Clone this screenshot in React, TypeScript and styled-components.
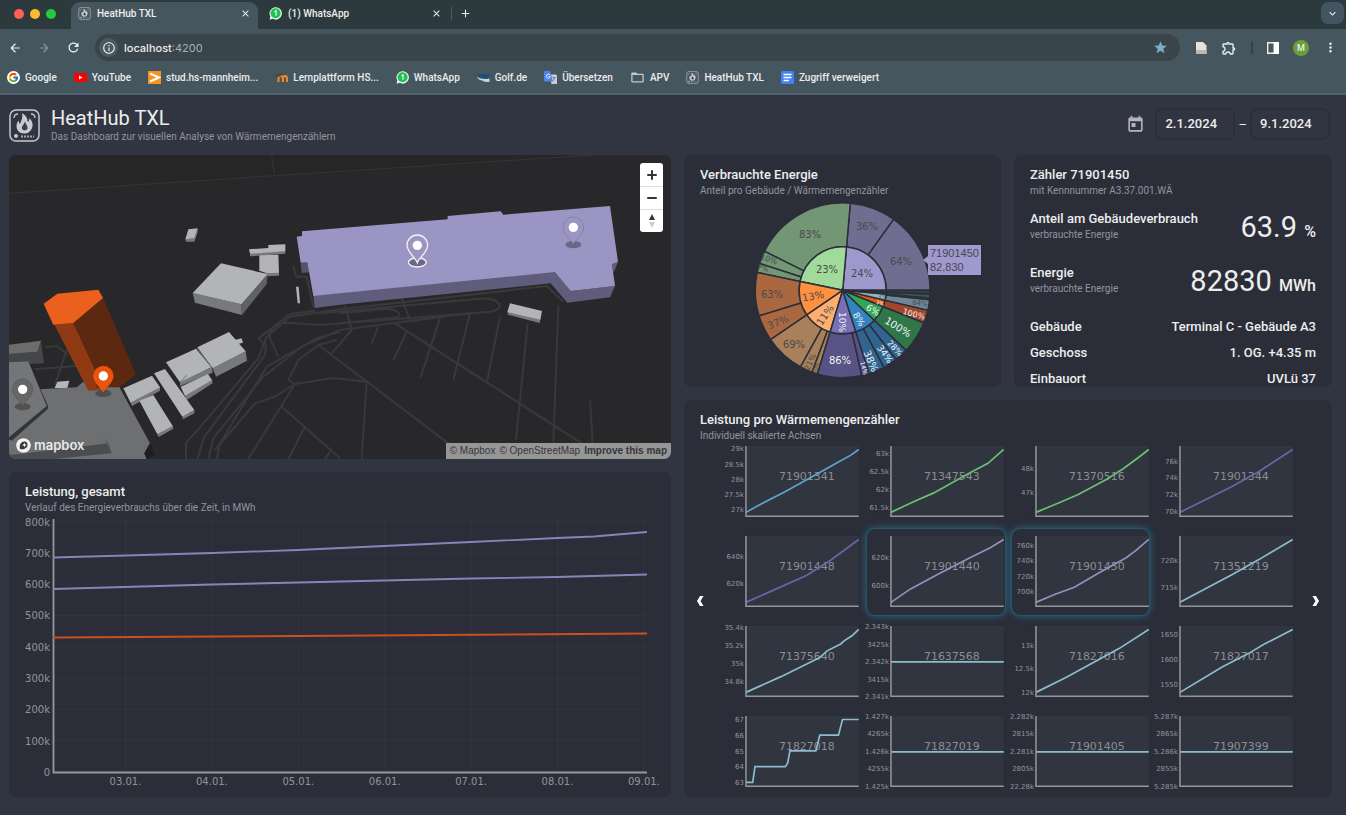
import React from "react";
import styled, { createGlobalStyle } from "styled-components";
import {
  MdArrowBack,
  MdArrowForward,
  MdRefresh,
  MdInfoOutline,
  MdStar,
  MdMoreVert,
  MdOutlineExtension,
  MdClose,
  MdAdd,
  MdToday,
  MdKeyboardArrowDown,
  MdFolderOpen,
} from "react-icons/md";
import { FcGoogle } from "react-icons/fc";

const color = {
  page: "#313541",
  card: "#2b2e39",
  plot: "#31353f",
  strip: "#2c393d",
  chrome: "#45565f",
  omnibox: "#39454a",
  text: "#eceded",
  muted: "#92949c",
  axis: "#96979d",
  gridline: "#31353f",
};

const GlobalStyle = createGlobalStyle`
  * { box-sizing: border-box; }
  body {
    margin: 0;
    background: ${color.page};
    color: ${color.text};
    font-family: Roboto, "Liberation Sans", sans-serif;
  }
  button { border: 0; padding: 0; background: none; color: inherit; font: inherit; cursor: pointer; }
  a { color: inherit; text-decoration: none; }
  svg { display: block; flex: none; }
  h1, h2, h3, p, dl, dt, dd { margin: 0; font-weight: inherit; }
`;

const Screen = styled.div`
  display: flex;
  flex-direction: column;
  min-height: 100vh;
`;

/* ---------- browser window ---------- */

const Browser = styled.header`
  background: ${color.chrome};
  border-bottom: 2px solid #52626c;
  font-size: 10px;
  font-weight: 500;
`;

const TabStrip = styled.div`
  display: flex;
  align-items: center;
  height: 29px;
  padding: 0 2px 0 14px;
  background: ${color.strip};
`;

const Lights = styled.div`
  display: flex;
  gap: 6px;
  width: 57px;
  margin-top: -2px;
`;

const Light = styled.span<{ $fill: string }>`
  width: 10px;
  height: 10px;
  border-radius: 50%;
  background: ${(p) => p.$fill};
`;

const Tab = styled.div<{ $active?: boolean }>`
  display: flex;
  align-items: center;
  gap: 6px;
  align-self: flex-end;
  height: 27px;
  width: ${(p) => (p.$active ? 187 : 193)}px;
  padding: ${(p) => (p.$active ? "0 7px 5px 7px" : "0 9px 5px 11px")};
  border-radius: 9px 9px 0 0;
  background: ${(p) => (p.$active ? color.chrome : "transparent")};
`;

const TabDivider = styled.span`
  width: 1px;
  height: 13px;
  margin-top: -3px;
  background: #4b5b61;
`;

const TabTitle = styled.span`
  flex: 1;
  white-space: nowrap;
`;

const NewTab = styled.button`
  margin: -3px 0 0 7px;
`;

const TabSearch = styled.button`
  display: grid;
  place-items: center;
  width: 23px;
  height: 22px;
  margin: -3px 0 0 auto;
  border-radius: 7px;
  background: #425560;
`;

const Toolbar = styled.div`
  display: flex;
  align-items: center;
  height: 37px;
  padding: 0 8px;
`;

const NavButtons = styled.div`
  display: flex;
  gap: 15px;
  width: 87px;
`;

const NavButton = styled.button<{ $dim?: boolean }>`
  opacity: ${(p) => (p.$dim ? 0.4 : 1)};
`;

const Omnibox = styled.div`
  display: flex;
  align-items: center;
  flex: 1;
  height: 27px;
  padding: 0 12px 0 4px;
  border-radius: 14px;
  background: ${color.omnibox};
`;

const SiteInfo = styled.span`
  display: grid;
  place-items: center;
  width: 19px;
  height: 19px;
  border-radius: 50%;
  background: #4a5a63;
`;

const Address = styled.p`
  flex: 1;
  padding-left: 6px;
  font: 400 11px/16px Inter, "Liberation Sans", sans-serif;
  color: #a7b0b4;
  b { font-weight: 500; color: ${color.text}; }
`;

const Extensions = styled.div`
  display: flex;
  align-items: center;
  gap: 14px;
  padding-left: 15px;
`;

const Separator = styled.span`
  width: 2px;
  height: 13px;
  background: #33434a;
`;

const Avatar = styled.span`
  display: grid;
  place-items: center;
  width: 16px;
  height: 16px;
  border-radius: 50%;
  background: #689f38;
  font-size: 9px;
`;

const Bookmarks = styled.nav`
  display: flex;
  align-items: center;
  gap: 17px;
  height: 27px;
  padding: 0 7px 5px;
`;

const Bookmark = styled.a`
  display: flex;
  align-items: center;
  gap: 5px;
  white-space: nowrap;
`;

const WhiteDisc = styled.span`
  display: grid;
  place-items: center;
  width: 13px;
  height: 13px;
  border-radius: 50%;
  background: #fff;
`;

/* ---------- dashboard ---------- */

const AppHeader = styled.header`
  display: flex;
  align-items: center;
  height: 60px;
  padding: 0 16px 0 9px;
`;

const Titles = styled.div`
  flex: 1;
  padding: 0 0 2px 11px;
`;

const AppTitle = styled.h1`
  font-size: 20px;
  line-height: 24px;
`;

const Subtitle = styled.p`
  font-size: 10px;
  line-height: 16px;
  color: ${color.muted};
`;

const AppSubtitle = styled(Subtitle)`
  margin-top: 1px;
  line-height: 12px;
`;

const DateRange = styled.div`
  display: flex;
  align-items: center;
  gap: 3px;
  margin-top: -2px;
  font-size: 13px;
`;

const DateInput = styled.input`
  width: 80px;
  height: 32px;
  padding: 0 8px 1px;
  border: 2px solid #2b2f39;
  border-radius: 7px;
  background: transparent;
  color: ${color.text};
  font: 500 13px Roboto, sans-serif;
`;

const CalendarButton = styled.button`
  margin-right: 7px;
  color: #b4b6bc;
`;

const Dashboard = styled.main`
  display: grid;
  grid-template-columns: 662fr 648fr;
  gap: 13px;
  padding: 0 14px 18px 9px;
`;

const Column = styled.div`
  display: flex;
  flex-direction: column;
  gap: 13px;
  min-width: 0;
`;

const TopRow = styled.div`
  display: grid;
  grid-template-columns: 317fr 318fr;
  gap: 13px;
  height: 232px;
`;

const Card = styled.section`
  min-width: 0;
  padding-top: 12px;
  border-radius: 7px;
  background: ${color.card};
  overflow: hidden;
`;

const GrowingCard = styled(Card)`
  flex: 1;
`;

const CardHead = styled.div`
  padding: 0 16px;
`;

const CardTitle = styled.h2`
  font-size: 13px;
  font-weight: 500;
  line-height: 16px;
`;

const Chart = styled.svg`
  width: 100%;
  height: auto;
  overflow: visible;
  font-family: "DejaVu Sans", sans-serif;
`;

const WideChart = styled(Chart)`
  margin-top: -1px;
`;

const PieChart = styled(WideChart)`
  height: 189px;
`;

/* ---------- map ---------- */

const MapCard = styled.section`
  position: relative;
  border-radius: 7px;
  overflow: hidden;
`;

const MapDrawing = styled.svg`
  width: 100%;
  height: auto;
`;

const MapControls = styled.div`
  position: absolute;
  top: 8px;
  right: 8px;
  width: 23px;
  border-radius: 3px;
  background: #fff;
  overflow: hidden;
`;

const MapButton = styled.button`
  display: grid;
  place-items: center;
  width: 100%;
  height: 23px;
  & + & { border-top: 1px solid #ddd; }
`;

const MapLogo = styled.a`
  position: absolute;
  left: 7px;
  bottom: 5px;
  display: flex;
  align-items: center;
  gap: 3px;
  color: #e8e8e8;
  font: 600 13px/18px Inter, sans-serif;
`;

const Attribution = styled.div`
  position: absolute;
  right: 0;
  bottom: 0;
  display: flex;
  gap: 4px;
  padding: 0 4px;
  background: #969696;
  color: #36373a;
  font: 10px/16px "Liberation Sans", sans-serif;
  b { font-weight: 700; }
`;

const PURPLE_TOP =
  "890,260 906,258 906,244 1343,208 1343,198 1502,184 1510,194 1830,168 1854,335 1836,342 1845,408 1712,423 1665,366 1020,430 940,438 922,337 902,338";

const roads = [
  "M558 927V878L600 832L775 625L800 560L870 500L1020 478L1640 408L1690 455",
  "M592 927L612 862L795 615L798 585L775 565L870 492L945 482",
  "M625 927L640 865L790 680L905 590L1020 540L1410 490L1360 690",
  "M650 927L660 880L800 650L950 565L1020 545",
  "M835 620L808 560Q810 520 860 518L960 525L1470 485Q1510 478 1496 460Q1480 442 1440 446L960 490",
  "M1020 490L1160 476Q1205 480 1195 502L1020 520",
  "M745 927L885 702L865 690L895 630L955 585L1160 740L1345 880",
  "M885 702L1000 684L1100 695L1085 927",
  "M645 900L765 760L825 740L885 702",
  "M845 770L1020 925M915 830L865 927M990 905L975 927",
  "M955 585L1010 570M995 610L1055 540L1035 465",
  "M1185 520L1745 880M1205 445L1230 510",
  "M1135 530L1115 580M1220 545L1180 632M1320 505L1262 682",
  "M1500 500L1462 690M1583 520L1548 870M1675 465L1660 880M1770 752L1778 880",
  "M135 592L170 588L205 615M200 600L165 705M105 658L230 648",
  "M880 345L888 380H920L940 470",
];

const Pin = ({ x, y, fill, active }: { x: number; y: number; fill: string; active?: boolean }) => (
  <g transform={`translate(${x} ${y})`}>
    <ellipse cy="52" rx="24" ry="11" fill="#000" opacity=".3" />
    {active && <ellipse cy="51" rx="27" ry="14" fill="none" stroke="#f2f1f8" strokeWidth="4" />}
    <path
      d="M0 52C-5 38-31 20-31 0A31 31 0 0 1 31 0C31 20 5 38 0 52Z"
      fill={fill}
      stroke={active ? "#f2f1f8" : "#00000030"}
      strokeWidth={active ? 4 : 2}
    />
    <circle r="14" fill="#fff" />
  </g>
);

const SiteMap = () => (
  <MapCard aria-label="Karte">
    <MapDrawing viewBox="27 15 1986 912" role="img" aria-label="Gebäude auf dem Gelände">
      <rect x="27" y="15" width="1986" height="912" fill="#28282a" />
      <path d="M27 15H1780L823 77L27 130Z" fill="#262626" />
      <path d="M27 130L823 77L1780 15M815 15L823 77" stroke="#353536" strokeWidth="3" fill="none" />
      <g stroke="#39393b" strokeWidth="6" fill="none" strokeLinejoin="round">
        {roads.map((d) => (
          <path key={d} d={d} />
        ))}
      </g>

      <polygon points="27,612 112,605 123,572 132,640 27,645" fill="#454647" />
      <polygon points="27,584 123,572 112,605 27,612" fill="#6b6d6d" />
      <polygon points="172,695 208,692 202,714 164,714" fill="#b5b6b8" />
      <polygon points="118,718 230,712 250,695 270,712 355,706 450,880 433,910 440,927 27,927 27,870 142,770" fill="#6e6f70" />
      <polygon points="27,637 85,634 144,768 144,776 35,872 27,868" fill="#333435" />
      <polygon points="27,637 85,634 140,768 27,862" fill="#747576" />
      <polygon points="60,912 325,880 335,910 160,927 27,927 27,915" fill="#4b4c4d" />
      <polygon points="325,880 335,910 310,862" fill="#5a5b5c" />
      <polygon points="450,880 433,910 440,927 465,915" fill="#1f1f22" />

      <polygon points="131,461 160,524 220,519 300,690 300,720 265,722" fill="#8f3a13" />
      <polygon points="220,519 309,444 407,672 360,712 290,712 283,655" fill="#5c280f" />
      <polygon points="131,461 172,431 295,419 309,444 220,519 160,524" fill="#ea601c" />

      <g fill="#77797b">
        <polygon points="556,268 583,265 593,235 593,247 583,275 558,275" />
        <polygon points="578,429 724,463 726,495 585,458" />
        <polygon points="750,310 856,303 856,311 750,319" />
        <polygon points="800,370 837,366 837,377 800,379" />
        <polygon points="638,655 737,604 741,632 648,680" />
        <polygon points="540,695 636,652 638,668 540,708" />
        <polygon points="555,738 636,688 638,700 560,750" />
        <polygon points="547,800 583,780 583,790 549,808" />
        <polygon points="392,758 480,710 480,722 396,768" />
        <polygon points="472,853 518,826 520,836 476,861" />
        <polygon points="1522,484 1621,507 1619,519 1524,494" />
      </g>
      <polygon points="724,463 803,372 800,402 726,495" fill="#5f6163" />
      <g fill="#b3b4b6">
        <polygon points="565,238 593,235 583,265 556,268" />
        <polygon points="663,340 803,372 724,463 578,429" />
        <polygon points="747,298 805,294 805,285 856,283 856,304 750,311" />
        <polygon points="778,316 835,314 837,368 800,370 778,362" />
        <polygon points="888,410 896,410 900,460 893,460" />
        <polygon points="704,570 725,565 729,578 714,582" />
        <polygon points="592,592 687,546 737,604 638,655" />
        <polygon points="498,637 588,596 634,652 540,697" />
        <polygon points="542,710 624,672 636,690 555,738" />
        <polygon points="462,670 495,657 583,780 547,800" />
        <polygon points="370,715 456,677 480,712 392,758" />
        <polygon points="418,752 460,735 518,828 472,853" />
        <polygon points="1530,460 1626,483 1621,509 1522,486" />
      </g>
      <path d="M590 594L636 652M560 676L540 697" stroke="#6d6f71" strokeWidth="3" />

      <polygon points="902,338 922,337 930,367 905,369" fill="#55526e" />
      <polygon points="940,436 1020,428 1665,364 1712,423 1845,408 1830,442 1702,458 1652,400 1020,464 944,474" fill="#5f5d7b" />
      <polygon points="1836,340 1854,335 1841,368" fill="#5f5d7b" />
      <polygon points={PURPLE_TOP} fill="#9a95c2" />

      <Pin x={68} y={718} fill="#656667" />
      <Pin x={310} y={678} fill="#e8550f" />
      <Pin x={1252} y={286} fill="#9a95c2" active />
      <Pin x={1720} y={232} fill="#9a95c2" />
    </MapDrawing>
    <MapControls>
      <MapButton aria-label="Vergrößern">
        <svg width="10" height="10" viewBox="0 0 10 10">
          <path d="M5 1V9M1 5H9" stroke="#333" strokeWidth="2" strokeLinecap="round" />
        </svg>
      </MapButton>
      <MapButton aria-label="Verkleinern">
        <svg width="10" height="10" viewBox="0 0 10 10">
          <path d="M1 5H9" stroke="#333" strokeWidth="2" strokeLinecap="round" />
        </svg>
      </MapButton>
      <MapButton aria-label="Nach Norden ausrichten">
        <svg width="8" height="14" viewBox="0 0 8 14">
          <path d="M1 6L4 0L7 6Z" fill="#333" />
          <path d="M1 8L4 14L7 8Z" fill="#ccc" />
        </svg>
      </MapButton>
    </MapControls>
    <MapLogo href="#mapbox">
      <svg width="15" height="15" viewBox="0 0 15 15">
        <circle cx="7.500" cy="7.500" r="7.300" fill="#f2f2f2" />
        <path d="M4 11C3 7 5 3.500 8.500 3.500A3.400 3.400 0 0 1 11.500 7C11.500 10 8 12 4 11Z" fill="#3a3a3c" />
        <path d="M8.400 4.800L9.100 6.300L10.600 7L9.100 7.700L8.400 9.200L7.700 7.700L6.200 7L7.700 6.300Z" fill="#f2f2f2" />
      </svg>
      mapbox
    </MapLogo>
    <Attribution>
      <a href="#mapbox">© Mapbox</a>
      <a href="#osm">© OpenStreetMap</a>
      <a href="#improve">
        <b>Improve this map</b>
      </a>
    </Attribution>
  </MapCard>
);

/* ---------- total line chart ---------- */

const yLabels = ["800k", "700k", "600k", "500k", "400k", "300k", "200k", "100k", "0"];
const xLabels = ["03.01.", "04.01.", "05.01.", "06.01.", "07.01.", "08.01.", "09.01."];
const totals = [
  { stroke: "#8984b8", points: "44,42.500 117,40.500 203,38 289,35 375,31 462,27 548,23 585,21.500 638,17" },
  { stroke: "#8984b8", points: "44,74 203,69.500 289,67.500 375,65.500 462,63.500 548,62 638,59.500" },
  { stroke: "#c9511c", points: "44,122.500 289,121 638,118.500" },
];

const TotalChart = () => (
  <WideChart viewBox="0 0 662 282" role="img" aria-label="Verlauf des Energieverbrauchs" fontSize="10" fill={color.muted}>
    {yLabels.map((label, i) => {
      const y = 6.5 + i * 31.3;
      return (
        <g key={label}>
          <path d={`M44 ${y}H638`} stroke={color.gridline} />
          <text x="41" y={y + 4} textAnchor="end">
            {label}
          </text>
        </g>
      );
    })}
    {xLabels.map((label, i) => {
      const x = 116.5 + i * 86.4;
      return (
        <g key={label}>
          <path d={`M${x} 4V257`} stroke={color.gridline} />
          <text x={x} y="270" textAnchor="middle">
            {label}
          </text>
        </g>
      );
    })}
    <path d="M44.500 4V257.500H638" fill="none" stroke={color.axis} strokeWidth="1.800" />
    {totals.map((line) => (
      <polyline key={line.points} points={line.points} fill="none" stroke={line.stroke} strokeWidth="1.800" />
    ))}
  </WideChart>
);

/* ---------- sunburst ---------- */

const CX = 158.7;
const CY = 92.3;
const R_INNER = 43.5;
const R_OUTER = 87.4;

const at = (r: number, deg: number) => {
  const a = (deg * Math.PI) / 180;
  return `${(CX + r * Math.cos(a)).toFixed(2)} ${(CY - r * Math.sin(a)).toFixed(2)}`;
};

const slice = (r0: number, r1: number, from: number, to: number) =>
  `M${at(r0, from)}L${at(r1, from)}A${r1} ${r1} 0 0 0 ${at(r1, to)}L${at(r0, to)}A${r0} ${r0} 0 0 1 ${at(r0, from)}Z`;

const buildings: { to: number; fill: string; outer: string; splits: number[] }[] = [
  { to: 85, fill: "#9e98cc", outer: "#706e90", splits: [54.4, 85] },
  { to: 168.2, fill: "#a1db9c", outer: "#739674", splits: [153.5, 162.1, 168.2] },
  { to: 214.4, fill: "#fd9140", outer: "#aa6840", splits: [197, 214.4] },
  { to: 253.2, fill: "#fcaf6e", outer: "#a88059", splits: [241.2, 249.5, 253.2] },
  { to: 287.6, fill: "#786fb4", outer: "#585285", splits: [282.6, 287.6] },
  { to: 316.6, fill: "#3383bf", outer: "#2f6590", splits: [298.2, 307.8, 316.6] },
  { to: 338.2, fill: "#31a655", outer: "#307648", splits: [338.2] },
  { to: 346.9, fill: "#e8560f", outer: "#a3472a", splits: [346.9] },
  { to: 355, fill: "#8fb4c9", outer: "#6c8799", splits: [353.8, 355] },
  { to: 357.5, fill: "#4f7466", outer: "#40584f", splits: [357.5] },
  { to: 360, fill: "#39494f", outer: "#303f42", splits: [360] },
];

const DARK = "#4a4a4c";
const LIGHT = "#f2f3f7";
const pieLabels: [string, number, number, number, string, number][] = [
  ["83%", 126, 36, 0, DARK, 10],
  ["36%", 183, 28, 0, DARK, 10],
  ["64%", 217, 63, 0, DARK, 10],
  ["24%", 178, 75, 0, DARK, 10],
  ["23%", 143, 71, 0, DARK, 10],
  ["10%", 85, 61, 18, DARK, 8],
  ["7%", 79, 70, 14, DARK, 7],
  ["63%", 88, 96, 0, DARK, 10],
  ["13%", 129, 98, -10, DARK, 10],
  ["37%", 94, 124, -22, DARK, 10],
  ["11%", 141, 117, -56, DARK, 10],
  ["69%", 110, 146, 0, DARK, 10],
  ["21%", 126, 164, -66, DARK, 8],
  ["10%", 132, 170, -72, DARK, 5],
  ["10%", 158, 124, 90, LIGHT, 9],
  ["86%", 156, 162, 0, LIGHT, 10],
  ["14%", 180, 170, 76, LIGHT, 6],
  ["8%", 175, 121, 60, LIGHT, 9],
  ["38%", 187, 163, 66, LIGHT, 10],
  ["34%", 201, 156, 55, LIGHT, 9],
  ["28%", 211, 150, 46, LIGHT, 8],
  ["6%", 189, 112, 32, LIGHT, 9],
  ["100%", 214, 129, 32, LIGHT, 10],
  ["100%", 230, 116, 15, LIGHT, 8],
  ["3%", 196, 105, 16, LIGHT, 5],
  ["84%", 236, 105, 8, DARK, 7],
  ["2%", 199, 98, 10, DARK, 5],
];

const Sunburst = () => (
  <PieChart viewBox="0 0 317 189" role="img" aria-label="Anteil pro Gebäude und Wärmemengenzähler">
    <g stroke={color.card} strokeWidth="1.500">
      {buildings.map((b, i) => {
        const from = i ? buildings[i - 1].to : 0;
        return (
          <g key={b.to}>
            {b.splits.map((s, j) => (
              <path key={s} d={slice(R_INNER, R_OUTER, j ? b.splits[j - 1] : from, s)} fill={b.outer} />
            ))}
            <path d={slice(0, R_INNER, from, b.to)} fill={b.fill} />
          </g>
        );
      })}
    </g>
    {pieLabels.map(([label, x, y, turn, fill, size]) => (
      <text
        key={`${x}-${y}`}
        transform={`translate(${x} ${y}) rotate(${turn})`}
        y={size * 0.36}
        fontSize={size}
        fill={fill}
        textAnchor="middle"
      >
        {label}
      </text>
    ))}
    <path d="M239 62L244 58V47H297V77H244V66Z" fill="#a099cd" />
    <g fill="#48464f" fontSize="11" fontFamily="Liberation Sans, sans-serif">
      <text x="246" y="59">71901450</text>
      <text x="246" y="73">82,830</text>
    </g>
  </PieChart>
);

/* ---------- meter details ---------- */

const Metric = styled.div<{ $first?: boolean }>`
  display: flex;
  justify-content: space-between;
  align-items: center;
  height: 32px;
  margin: ${(p) => (p.$first ? 12 : 22)}px 16px 0;
`;

const MetricTitle = styled.h3`
  font-size: 13px;
  font-weight: 500;
  line-height: 16px;
`;

const MetricValue = styled.p`
  padding-top: 4px;
  font-size: 29px;
  line-height: 32px;
  small { font-size: 16px; font-weight: 500; }
`;

const Facts = styled.dl`
  display: grid;
  grid-template-columns: auto auto;
  justify-content: space-between;
  row-gap: 10px;
  margin: 22px 16px 0;
  font-size: 13px;
  font-weight: 500;
  line-height: 16px;
  dd { text-align: right; }
`;

/* ---------- small multiples ---------- */

const Multiples = styled.div`
  display: flex;
  align-items: center;
  margin-top: -5px;
  padding-bottom: 2px;
`;

const Pager = styled.button`
  display: grid;
  place-items: center;
  width: 38px;
  height: 40px;
  margin-bottom: 32px;
  &:first-child { padding-right: 6px; }
  &:last-child { padding-left: 6px; }
`;

const MeterGrid = styled.div`
  display: grid;
  flex: 1;
  grid-template-columns: repeat(4, 1fr);
  gap: 4px 7px;
`;

const MeterCell = styled.div<{ $selected?: boolean }>`
  border-radius: 8px;
  box-shadow: ${(p) => (p.$selected ? "0 0 0 1px #27566a, 0 0 7px 1px #2b6780" : "none")};
`;

type Meter = {
  id: string;
  stroke: string;
  ticks: [string, number][];
  line: [number, number][];
  selected?: boolean;
};

const BLUE = "#5fa4cb";
const GREEN = "#6cbf70";
const VIOLET = "#6b64a6";
const LILAC = "#9490be";
const ICE = "#8cbccf";

const spread = (labels: string[], first: number, step: number): [string, number][] =>
  labels.map((l, i) => [l, first + i * step]);
const flat: [number, number][] = [[0, 0.485], [1, 0.485]];

const meters: Meter[] = [
  { id: "71901341", stroke: BLUE, ticks: spread(["29k", "28.5k", "28k", "27.5k", "27k"], 9.8, 15.3), line: [[0, 0], [0.13, 0.13], [0.35, 0.33], [0.59, 0.57], [0.8, 0.78], [0.93, 0.91], [1, 1]] },
  { id: "71347543", stroke: GREEN, ticks: spread(["63k", "62.5k", "62k", "61.5k"], 14.5, 18), line: [[0, 0], [0.19, 0.16], [0.38, 0.31], [0.68, 0.61], [0.86, 0.78], [1, 1]] },
  { id: "71370516", stroke: GREEN, ticks: spread(["48k", "47k"], 29.8, 24), line: [[0, 0], [0.2, 0.15], [0.37, 0.28], [0.62, 0.52], [0.77, 0.69], [0.9, 0.86], [1, 1]] },
  { id: "71901344", stroke: VIOLET, ticks: spread(["76k", "74k", "72k", "70k"], 22.2, 16.8), line: [[0, 0], [0.47, 0.42], [0.7, 0.65], [1, 1]] },
  { id: "71901448", stroke: VIOLET, ticks: spread(["640k", "620k"], 27.3, 27.6), line: [[0, 0], [0.54, 0.43], [0.75, 0.67], [1, 1]] },
  { id: "71901440", stroke: LILAC, selected: true, ticks: spread(["620k", "600k"], 29, 27.3), line: [[0, 0], [0.17, 0.21], [0.4, 0.43], [0.7, 0.71], [0.88, 0.87], [1, 1]] },
  { id: "71901450", stroke: LILAC, selected: true, ticks: spread(["760k", "740k", "720k", "700k"], 16.3, 15.5), line: [[0, 0], [0.17, 0.13], [0.34, 0.24], [0.56, 0.47], [0.8, 0.71], [0.89, 0.83], [1, 1]] },
  { id: "71351219", stroke: ICE, ticks: spread(["720k", "715k"], 31.3, 27.4), line: [[0, 0], [0.46, 0.44], [0.7, 0.68], [1, 1]] },
  { id: "71375640", stroke: ICE, ticks: spread(["35.4k", "35.2k", "35k", "34.8k"], 8.5, 18), line: [[0, 0], [0.31, 0.25], [0.65, 0.55], [0.72, 0.66], [0.84, 0.77], [0.87, 0.82], [0.94, 0.9], [1, 1]] },
  { id: "71637568", stroke: ICE, ticks: spread(["2.343k", "3425k", "2.342k", "3415k", "2.341k"], 8, 17.4), line: flat },
  { id: "71827016", stroke: ICE, ticks: spread(["13k", "12.5k", "12k"], 26.2, 23.8), line: [[0, 0], [0.27, 0.24], [0.74, 0.7], [1, 1]] },
  { id: "71827017", stroke: ICE, ticks: spread(["1650", "1600", "1550"], 15.5, 25.3), line: [[0, 0], [0.37, 0.4], [0.61, 0.62], [0.74, 0.76], [1, 1]] },
  { id: "71827018", stroke: ICE, ticks: spread(["67", "66", "65", "64", "63"], 10.8, 15.75), line: [[0, 0], [0.06, 0], [0.08, 0.25], [0.35, 0.25], [0.37, 0.31], [0.39, 0.5], [0.62, 0.5], [0.655, 0.75], [0.82, 0.75], [0.856, 1], [1, 1]] },
  { id: "71827019", stroke: ICE, ticks: spread(["1.427k", "4265k", "1.426k", "4255k", "1.425k"], 7.6, 17.4), line: flat },
  { id: "71901405", stroke: ICE, ticks: spread(["2.282k", "2815k", "2.281k", "2805k", "22.28k"], 7.6, 17.4), line: flat },
  { id: "71907399", stroke: ICE, ticks: spread(["5.287k", "2865k", "5.286k", "2855k", "5.285k"], 7.6, 17.4), line: flat },
];

const MeterChart = ({ meter }: { meter: Meter }) => (
  <MeterCell $selected={meter.selected}>
    <Chart viewBox="0 0 138 86" role="img" aria-label={`Zähler ${meter.id}`}>
      <rect x="24" y="7" width="113" height="70" fill={color.plot} />
      <g fontSize="7" fill={color.muted} textAnchor="end">
        {meter.ticks.map(([label, y]) => (
          <text key={label} x="22" y={y + 2.5}>
            {label}
          </text>
        ))}
      </g>
      <text x="85" y="41.500" fontSize="11" fill="#8b8d94" textAnchor="middle">
        {meter.id}
      </text>
      <polyline
        points={meter.line.map(([x, y]) => `${24 + x * 113},${73.5 - y * 63}`).join(" ")}
        fill="none"
        stroke={meter.stroke}
        strokeWidth="1.700"
      />
      <path d="M24 7V77.500H137" fill="none" stroke={color.axis} strokeWidth="1.500" />
    </Chart>
  </MeterCell>
);

/* ---------- icons ---------- */

const HeatIcon = ({ width, height }: { width: number; height: number }) => (
  <svg width={width} height={height} viewBox="0 0 31 33">
    <rect x="1" y="1" width="29" height="31" rx="6" fill="none" stroke="#c6c8cc" strokeWidth="1.500" />
    <path d="M5 9Q5 5 9 5M22 5Q26 5 26 9" fill="none" stroke="#c6c8cc" strokeWidth="1.300" />
    <path
      d="M13 4C17 7 19 9 18.500 13C20 12 20.500 11 20.500 9C24 13 24.500 17 22 21C20 24 17 24.500 15.500 24.500C12 24.500 9 23 8 20C7 17 7.500 14 9.500 11.500C9.800 13 10 14 11 15C12.500 11 14 9 13 4Z"
      fill="#c9cbd0"
    />
    <path d="M16 12.500C16.500 15 19 17 18.500 19.500C18 22 13 22 12.800 19C12.700 17 15 15.500 16 12.500Z" fill="#3a3e4a" />
    <circle cx="7" cy="27" r="2" fill="#c6c8cc" />
    <path d="M12 27.500H25" stroke="#a4a6ac" strokeWidth="2" strokeDasharray="2 1" />
  </svg>
);

const WhatsAppIcon = () => (
  <svg width="13" height="13" viewBox="0 0 13 13">
    <path d="M.5 12.700L1.300 9.400A6.200 6.200 0 1 1 3.700 11.800Z" fill="#e9f4ec" />
    <circle cx="6.600" cy="6.300" r="5" fill="#1fc152" />
    <path d="M5.500 4.700L7 3.800V8.800" fill="none" stroke="#fff" strokeWidth="1.100" />
  </svg>
);

const YouTubeIcon = () => (
  <svg width="13" height="13" viewBox="0 0 13 13">
    <rect y="2" width="13" height="9" rx="2" fill="#f00" />
    <path d="M5 4.500V8.500L8.600 6.500Z" fill="#fff" />
  </svg>
);

const MoodleTileIcon = () => (
  <svg width="13" height="13" viewBox="0 0 13 13">
    <rect width="13" height="13" fill="#f7941d" />
    <path d="M2 2.500L11 6.500L2 10.500" fill="none" stroke="#fff" strokeWidth="2" />
  </svg>
);

const MoodleIcon = () => (
  <svg width="13" height="13" viewBox="0 0 13 13">
    <path d="M3.500 11V7.500Q3.500 5 5.700 5T7.900 7.500V11M7.900 7.500Q7.900 5 9.900 5T12 7.500V11" fill="none" stroke="#f08a24" strokeWidth="2" />
    <path d="M0 5L4 2.500L8 3L4.500 5.500ZM1 5V8" fill="#4a4a46" stroke="#4a4a46" strokeWidth=".6" />
  </svg>
);

const GolfIcon = () => (
  <svg width="13" height="13" viewBox="0 0 13 13">
    <path d="M1 3H12V7Q6 9 1 5Z" fill="#1d4e7c" />
    <path d="M0 6Q5 9 12.500 7.500V11Q8 11.500 5 9.500Q1 8.500 0 6Z" fill="#c9d2d6" />
  </svg>
);

const TranslateIcon = () => (
  <svg width="13" height="13" viewBox="0 0 13 13">
    <path d="M5 3.500H11.500Q13 3.500 13 5V13H7.500Z" fill="#c9ccd0" />
    <path d="M8.500 6.500H11.500M10.500 6.500Q10 9 8.500 10" stroke="#6b747c" fill="none" />
    <path d="M0 1Q0 0 1 0H6L9 10.500H1Q0 10.500 0 9.500Z" fill="#4d87ee" />
    <path d="M6 4.200A2 2 0 1 0 6 6.300V5.500H4.500" fill="none" stroke="#dfe9fc" />
  </svg>
);

const DocsIcon = () => (
  <svg width="13" height="13" viewBox="0 0 13 13">
    <rect width="13" height="13" rx="1.500" fill="#4183f3" />
    <path d="M2.500 3.500H10.500M2.500 6.500H10.500M2.500 9.500H8" stroke="#fff" strokeWidth="1.300" />
  </svg>
);

const GoogleIcon = () => (
  <WhiteDisc>
    <FcGoogle size={11} />
  </WhiteDisc>
);

const bookmarks: { label: string; icon: React.ReactNode }[] = [
  { label: "Google", icon: <GoogleIcon /> },
  { label: "YouTube", icon: <YouTubeIcon /> },
  { label: "stud.hs-mannheim...", icon: <MoodleTileIcon /> },
  { label: "Lernplattform HS...", icon: <MoodleIcon /> },
  { label: "WhatsApp", icon: <WhatsAppIcon /> },
  { label: "Golf.de", icon: <GolfIcon /> },
  { label: "Übersetzen", icon: <TranslateIcon /> },
  { label: "APV", icon: <MdFolderOpen size={15} color="#c3cacd" /> },
  { label: "HeatHub TXL", icon: <HeatIcon width={13} height={13} /> },
  { label: "Zugriff verweigert", icon: <DocsIcon /> },
];

export default function App() {
  return (
    <Screen>
      <GlobalStyle />
      <Browser>
        <TabStrip>
          <Lights>
            <Light $fill="#fe5f57" />
            <Light $fill="#febb2e" />
            <Light $fill="#28c840" />
          </Lights>
          <Tab $active>
            <HeatIcon width={13} height={13} />
            <TabTitle>HeatHub TXL</TabTitle>
            <button aria-label="Tab schließen">
              <MdClose size={11} />
            </button>
          </Tab>
          <Tab>
            <WhatsAppIcon />
            <TabTitle>(1) WhatsApp</TabTitle>
            <button aria-label="Tab schließen">
              <MdClose size={11} />
            </button>
          </Tab>
          <TabDivider />
          <NewTab aria-label="Neuer Tab">
            <MdAdd size={13} />
          </NewTab>
          <TabSearch aria-label="Tabs durchsuchen">
            <MdKeyboardArrowDown size={13} />
          </TabSearch>
        </TabStrip>
        <Toolbar>
          <NavButtons>
            <NavButton aria-label="Zurück">
              <MdArrowBack size={14} />
            </NavButton>
            <NavButton aria-label="Vorwärts" $dim>
              <MdArrowForward size={14} />
            </NavButton>
            <NavButton aria-label="Neu laden">
              <MdRefresh size={15} />
            </NavButton>
          </NavButtons>
          <Omnibox>
            <SiteInfo>
              <MdInfoOutline size={14} />
            </SiteInfo>
            <Address>
              <b>localhost</b>:4200
            </Address>
            <MdStar size={15} color="#78afc1" />
          </Omnibox>
          <Extensions>
            <svg width="12" height="12" viewBox="0 0 12 12">
              <path d="M1 0H8L11.500 3.500V12H1Z" fill="#e3e2df" />
              <path d="M1 8H11.500V12H1Z" fill="#b9b8b5" />
            </svg>
            <MdOutlineExtension size={16} />
            <Separator />
            <svg width="12" height="12" viewBox="0 0 12 12">
              <path d="M.7.700H11.300V11.300H.7Z" fill="none" stroke="#eceded" strokeWidth="1.400" />
              <path d="M6.500 0H12V12H6.500Z" fill="#fff" />
            </svg>
            <Avatar>M</Avatar>
            <MdMoreVert size={15} />
          </Extensions>
        </Toolbar>
        <Bookmarks>
          {bookmarks.map((b) => (
            <Bookmark key={b.label} href="#bookmark">
              {b.icon}
              {b.label}
            </Bookmark>
          ))}
        </Bookmarks>
      </Browser>

      <AppHeader>
        <HeatIcon width={31} height={33} />
        <Titles>
          <AppTitle>HeatHub TXL</AppTitle>
          <AppSubtitle>Das Dashboard zur visuellen Analyse von Wärmemengenzählern</AppSubtitle>
        </Titles>
        <DateRange>
          <CalendarButton aria-label="Zeitraum wählen">
            <MdToday size={19} />
          </CalendarButton>
          <DateInput aria-label="Von" defaultValue="2.1.2024" />
          –
          <DateInput aria-label="Bis" defaultValue="9.1.2024" />
        </DateRange>
      </AppHeader>

      <Dashboard>
        <Column>
          <SiteMap />
          <GrowingCard>
            <CardHead>
              <CardTitle>Leistung, gesamt</CardTitle>
              <Subtitle>Verlauf des Energieverbrauchs über die Zeit, in MWh</Subtitle>
            </CardHead>
            <TotalChart />
          </GrowingCard>
        </Column>
        <Column>
          <TopRow>
            <Card>
              <CardHead>
                <CardTitle>Verbrauchte Energie</CardTitle>
                <Subtitle>Anteil pro Gebäude / Wärmemengenzähler</Subtitle>
              </CardHead>
              <Sunburst />
            </Card>
            <Card>
              <CardHead>
                <CardTitle>Zähler 71901450</CardTitle>
                <Subtitle>mit Kennnummer A3.37.001.WÄ</Subtitle>
              </CardHead>
              <Metric $first>
                <div>
                  <MetricTitle>Anteil am Gebäudeverbrauch</MetricTitle>
                  <Subtitle>verbrauchte Energie</Subtitle>
                </div>
                <MetricValue>
                  63.9 <small>%</small>
                </MetricValue>
              </Metric>
              <Metric>
                <div>
                  <MetricTitle>Energie</MetricTitle>
                  <Subtitle>verbrauchte Energie</Subtitle>
                </div>
                <MetricValue>
                  82830 <small>MWh</small>
                </MetricValue>
              </Metric>
              <Facts>
                <dt>Gebäude</dt>
                <dd>Terminal C - Gebäude A3</dd>
                <dt>Geschoss</dt>
                <dd>1. OG. +4.35 m</dd>
                <dt>Einbauort</dt>
                <dd>UVLü 37</dd>
              </Facts>
            </Card>
          </TopRow>
          <GrowingCard>
            <CardHead>
              <CardTitle>Leistung pro Wärmemengenzähler</CardTitle>
              <Subtitle>Individuell skalierte Achsen</Subtitle>
            </CardHead>
            <Multiples>
              <Pager aria-label="Vorherige Seite">
                <svg width="8" height="12" viewBox="0 0 8 12">
                  <path d="M4 1H7.500L4.500 6L7.500 11H4L1 6Z" fill="#fff" />
                </svg>
              </Pager>
              <MeterGrid>
                {meters.map((m) => (
                  <MeterChart key={m.id} meter={m} />
                ))}
              </MeterGrid>
              <Pager aria-label="Nächste Seite">
                <svg width="8" height="12" viewBox="0 0 8 12">
                  <path d="M4 1H.5L3.500 6L.5 11H4L7 6Z" fill="#fff" />
                </svg>
              </Pager>
            </Multiples>
          </GrowingCard>
        </Column>
      </Dashboard>
    </Screen>
  );
}
